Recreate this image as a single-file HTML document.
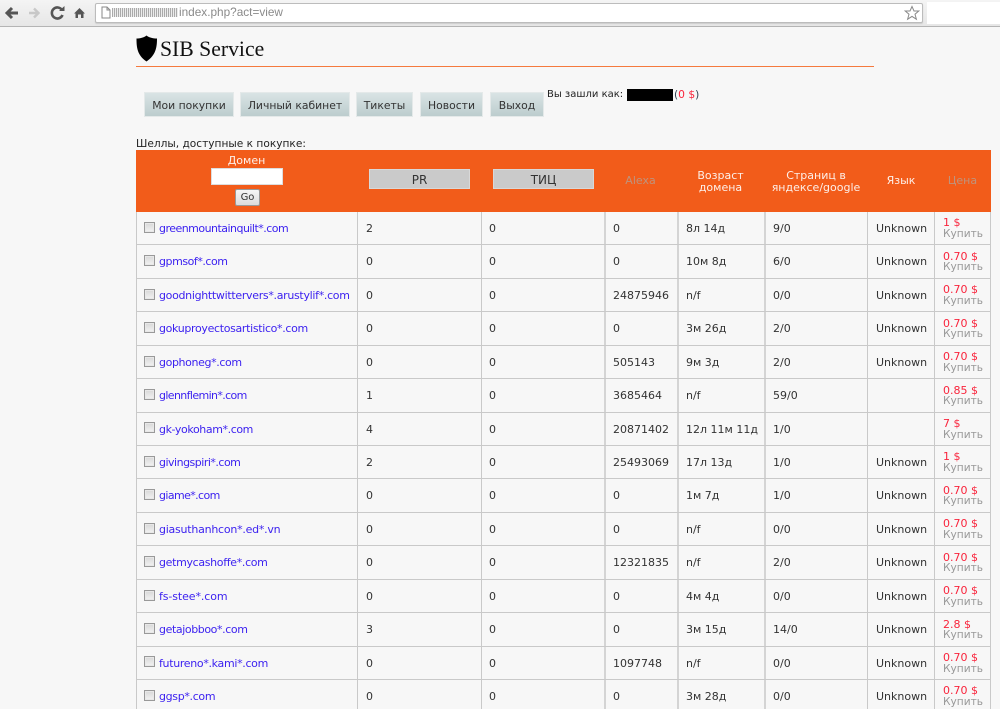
<!DOCTYPE html>
<html style="background:#f7f7f7"><head><meta charset="utf-8">
<style>
html,body{margin:0;padding:0;width:1000px;height:709px;overflow:hidden;background:#f7f7f7}
body{position:relative;font-family:"DejaVu Sans","Liberation Sans",sans-serif;font-size:11px;color:#333;filter:blur(.35px)}
.a{position:absolute;white-space:nowrap}
#chrome{position:absolute;left:0;top:0;width:1000px;height:26px;background:linear-gradient(#f4f4f4,#e6e6e6);border-bottom:1px solid #b4b4b4}
#url{position:absolute;left:95px;top:3px;width:826px;height:18px;background:#fff;border:1px solid #bcbcbc;border-radius:2px;box-shadow:0 1px 1px #ccc}
.btn{position:absolute;top:92px;height:25px;line-height:25px;text-align:center;background:linear-gradient(#d9e3e4,#bccccd);color:#333;font-size:10.8px;border:1px solid #e4e9e9;box-sizing:border-box}
.sort{position:absolute;top:169px;height:20px;line-height:20px;text-align:center;background:#cacaca;color:#333;font-size:12px;border:1px solid #d8d8d8;box-sizing:border-box}
.h{position:absolute;color:#fff;text-align:center;line-height:11px;font-size:11px;opacity:.9}
.r{position:absolute;left:136px;width:855px;height:33.43px;box-sizing:border-box;border-bottom:1px solid #c9c9c9}
.r span{position:absolute;top:10px;line-height:13px;white-space:nowrap;color:#333}
.r a{position:absolute;left:23px;top:10px;line-height:13px;color:#3a1ff0;text-decoration:none;white-space:nowrap}
.r i{position:absolute;left:8px;top:9.8px;width:9px;height:9px;border:1px solid #999;background:linear-gradient(#d8d8d8,#f2f2f2);box-shadow:inset 0 0 0 1px #e8e8e8}
.r b{position:absolute;font-weight:normal;left:807px;line-height:11px;white-space:nowrap}
.p{top:5.4px;color:#f9243c}
.k{top:17px;color:#999;font-size:10.6px}
.v{position:absolute;top:212px;height:497px;width:1px;background:#c9c9c9}
.w{width:2px;background:#d4d4d4}
</style></head><body>
<div id="chrome"></div>
<svg class="a" style="left:0;top:0" width="95" height="26" viewBox="0 0 95 26">
<path d="M18 13H8M12 8L7 13L12 18" fill="none" stroke="#555" stroke-width="3"/>
<path d="M29 13H38M34 8.5L38.5 13L34 17.5" fill="none" stroke="#c8c8c8" stroke-width="2.4"/>
<path d="M62 10A5.5 5.5 0 1 0 62.5 15" fill="none" stroke="#555" stroke-width="2.6"/>
<path d="M59 11H64.5V6z" fill="#555"/>
<path d="M74 13.5L79.5 8L85 13.5H83.5V18H81V14.5H78V18H75.5V13.5z" fill="#555"/>
</svg>
<div id="url"></div>
<svg class="a" style="left:100px;top:6px" width="12" height="13" viewBox="0 0 12 13"><path d="M2 1H7L10 4V12H2zM7 1V4H10" fill="#fff" stroke="#888"/></svg>
<div class="a" style="left:112px;top:8px;width:66px;height:9px;background:repeating-linear-gradient(90deg,#aaa 0 1px,#ececec 1px 2px);"></div>
<div class="a" style="left:179px;top:5px;line-height:15px;color:#8a8a8a;font-family:'Liberation Sans',sans-serif;font-size:11.8px">index.php?act=view</div>
<svg class="a" style="left:904px;top:5px" width="16" height="16" viewBox="0 0 16 16"><path d="M8 1.5L10 6H14.8L11 9.2L12.4 14.2L8 11.4L3.6 14.2L5 9.2L1.2 6H6z" fill="#fff" stroke="#8a8a8a"/></svg>
<div class="a" style="left:927px;top:2px;width:73px;height:22px;background:#fff"></div>

<svg class="a" style="left:136px;top:35px" width="22" height="27" viewBox="0 0 22 27"><path d="M10.5 0.5C8 2.5 4 3.5 0.5 3.5C0.5 12 1 20 10.5 26.5C20 20 21 12 21 3.5C17 3.5 13 2.5 10.5 0.5z" fill="#000"/></svg>
<div class="a" style="left:160px;top:36px;font-family:'Liberation Serif','DejaVu Serif',serif;font-size:21.7px;line-height:26px;color:#111">SIB Service</div>
<div class="a" style="left:136px;top:66px;width:738px;height:1px;background:#f57a3e"></div>

<div class="btn" style="left:144px;width:90px">Мои покупки</div>
<div class="btn" style="left:240px;width:110px">Личный кабинет</div>
<div class="btn" style="left:356px;width:57px">Тикеты</div>
<div class="btn" style="left:420px;width:63px">Новости</div>
<div class="btn" style="left:490px;width:54px">Выход</div>
<div class="a" style="left:547px;top:88px;line-height:13px;color:#222;font-size:10px">Вы зашли как:</div>
<div class="a" style="left:627px;top:89px;width:46px;height:12px;background:#000"></div>
<div class="a" style="left:674px;top:88px;line-height:13px;font-size:10.7px;color:#345">(<span style="color:#f9243c">0 $</span>)</div>

<div class="a" style="left:136px;top:137px;line-height:14px;color:#222;font-size:10.6px">Шеллы, доступные к покупке:</div>
<div class="a" style="left:136px;top:150px;width:855px;height:62px;background:#f25c1a"></div>
<div class="h" style="left:136px;width:221px;top:154px;line-height:13px">Домен</div>
<div class="a" style="left:211px;top:168px;width:70px;height:15px;background:#fff;border:1px solid #ddd"></div>
<div class="a" style="left:235px;top:189px;width:23px;height:15px;line-height:15px;text-align:center;background:linear-gradient(#f6f6f6,#dcdcdc);border:1px solid #999;border-radius:2px;font-size:10px;color:#333">Go</div>
<div class="sort" style="left:369px;width:101px">PR</div>
<div class="sort" style="left:493px;width:101px">ТИЦ</div>
<div class="h" style="left:604px;width:73px;top:175px;color:#b99a88;line-height:12px">Alexa</div>
<div class="h" style="left:677px;width:87px;top:170px;line-height:12px">Возраст<br>домена</div>
<div class="h" style="left:764px;width:104px;top:170px;line-height:12px">Страниц в<br>яндексе/google</div>
<div class="h" style="left:868px;width:66px;top:175px;line-height:12px">Язык</div>
<div class="h" style="left:934px;width:57px;top:175px;color:#b99a88;line-height:12px">Цена</div>

<div class="v" style="left:136px"></div><div class="v" style="left:357px"></div><div class="v" style="left:481px"></div><div class="v w" style="left:604px"></div><div class="v w" style="left:677px"></div><div class="v w" style="left:764px"></div><div class="v" style="left:867px"></div><div class="v" style="left:934px"></div><div class="v" style="left:990px"></div>

<div class="r" style="top:212px"><i></i><a style="letter-spacing:-.52px">greenmountainquilt*.com</a><span style="left:230px">2</span><span style="left:353px">0</span><span style="left:477px">0</span><span style="left:550px">8л 14д</span><span style="left:637px">9/0</span><span style="left:740px">Unknown</span><b class="p">1 $</b><b class="k">Купить</b></div>
<div class="r" style="top:245.43px"><i></i><a style="letter-spacing:-.45px">gpmsof*.com</a><span style="left:230px">0</span><span style="left:353px">0</span><span style="left:477px">0</span><span style="left:550px">10м 8д</span><span style="left:637px">6/0</span><span style="left:740px">Unknown</span><b class="p">0.70 $</b><b class="k">Купить</b></div>
<div class="r" style="top:278.86px"><i></i><a style="letter-spacing:-.31px">goodnighttwittervers*.arustylif*.com</a><span style="left:230px">0</span><span style="left:353px">0</span><span style="left:477px">24875946</span><span style="left:550px">n/f</span><span style="left:637px">0/0</span><span style="left:740px">Unknown</span><b class="p">0.70 $</b><b class="k">Купить</b></div>
<div class="r" style="top:312.29px"><i></i><a style="letter-spacing:-.33px">gokuproyectosartistico*.com</a><span style="left:230px">0</span><span style="left:353px">0</span><span style="left:477px">0</span><span style="left:550px">3м 26д</span><span style="left:637px">2/0</span><span style="left:740px">Unknown</span><b class="p">0.70 $</b><b class="k">Купить</b></div>
<div class="r" style="top:345.72px"><i></i><a style="letter-spacing:-.38px">gophoneg*.com</a><span style="left:230px">0</span><span style="left:353px">0</span><span style="left:477px">505143</span><span style="left:550px">9м 3д</span><span style="left:637px">2/0</span><span style="left:740px">Unknown</span><b class="p">0.70 $</b><b class="k">Купить</b></div>
<div class="r" style="top:379.15px"><i></i><a style="letter-spacing:-.62px">glennflemin*.com</a><span style="left:230px">1</span><span style="left:353px">0</span><span style="left:477px">3685464</span><span style="left:550px">n/f</span><span style="left:637px">59/0</span><b class="p">0.85 $</b><b class="k">Купить</b></div>
<div class="r" style="top:412.58px"><i></i><a style="letter-spacing:-.4px">gk-yokoham*.com</a><span style="left:230px">4</span><span style="left:353px">0</span><span style="left:477px">20871402</span><span style="left:550px">12л 11м 11д</span><span style="left:637px">1/0</span><b class="p">7 $</b><b class="k">Купить</b></div>
<div class="r" style="top:446.01px"><i></i><a style="letter-spacing:-.5px">givingspiri*.com</a><span style="left:230px">2</span><span style="left:353px">0</span><span style="left:477px">25493069</span><span style="left:550px">17л 13д</span><span style="left:637px">1/0</span><span style="left:740px">Unknown</span><b class="p">1 $</b><b class="k">Купить</b></div>
<div class="r" style="top:479.44px"><i></i><a style="letter-spacing:-.6px">giame*.com</a><span style="left:230px">0</span><span style="left:353px">0</span><span style="left:477px">0</span><span style="left:550px">1м 7д</span><span style="left:637px">1/0</span><span style="left:740px">Unknown</span><b class="p">0.70 $</b><b class="k">Купить</b></div>
<div class="r" style="top:512.87px"><i></i><a style="letter-spacing:-.24px">giasuthanhcon*.ed*.vn</a><span style="left:230px">0</span><span style="left:353px">0</span><span style="left:477px">0</span><span style="left:550px">n/f</span><span style="left:637px">0/0</span><span style="left:740px">Unknown</span><b class="p">0.70 $</b><b class="k">Купить</b></div>
<div class="r" style="top:546.3px"><i></i><a style="letter-spacing:-.33px">getmycashoffe*.com</a><span style="left:230px">0</span><span style="left:353px">0</span><span style="left:477px">12321835</span><span style="left:550px">n/f</span><span style="left:637px">2/0</span><span style="left:740px">Unknown</span><b class="p">0.70 $</b><b class="k">Купить</b></div>
<div class="r" style="top:579.73px"><i></i><a style="letter-spacing:-.1px">fs-stee*.com</a><span style="left:230px">0</span><span style="left:353px">0</span><span style="left:477px">0</span><span style="left:550px">4м 4д</span><span style="left:637px">0/0</span><span style="left:740px">Unknown</span><b class="p">0.70 $</b><b class="k">Купить</b></div>
<div class="r" style="top:613.16px"><i></i><a style="letter-spacing:-.4px">getajobboo*.com</a><span style="left:230px">3</span><span style="left:353px">0</span><span style="left:477px">0</span><span style="left:550px">3м 15д</span><span style="left:637px">14/0</span><span style="left:740px">Unknown</span><b class="p">2.8 $</b><b class="k">Купить</b></div>
<div class="r" style="top:646.59px"><i></i><a style="letter-spacing:-.32px">futureno*.kami*.com</a><span style="left:230px">0</span><span style="left:353px">0</span><span style="left:477px">1097748</span><span style="left:550px">n/f</span><span style="left:637px">0/0</span><span style="left:740px">Unknown</span><b class="p">0.70 $</b><b class="k">Купить</b></div>
<div class="r" style="top:680.02px"><i></i><a style="letter-spacing:-.33px">ggsp*.com</a><span style="left:230px">0</span><span style="left:353px">0</span><span style="left:477px">0</span><span style="left:550px">3м 28д</span><span style="left:637px">0/0</span><span style="left:740px">Unknown</span><b class="p">0.70 $</b><b class="k">Купить</b></div>
</body></html>
